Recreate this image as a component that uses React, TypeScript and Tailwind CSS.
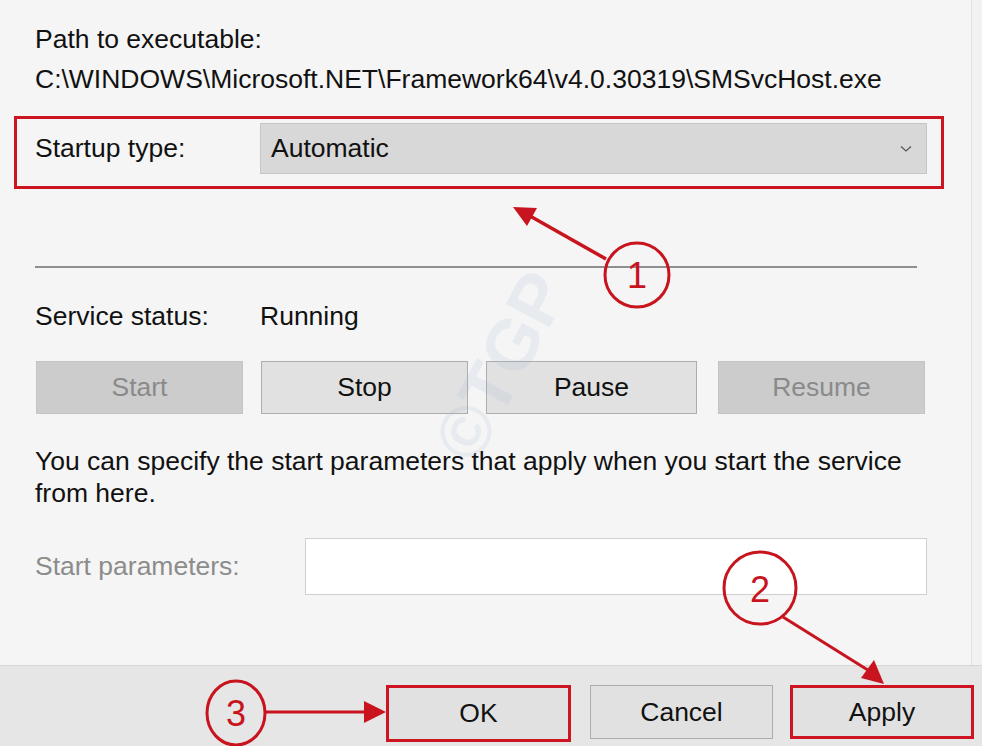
const font = "font-['Liberation_Sans',Arial,sans-serif]";

function ServiceButton({ label, disabled, className }: { label: string; disabled?: boolean; className: string }) {
  return (
    <div
      className={
        (disabled
          ? "h-[53px] flex items-center justify-center border border-[#c4c4c4] bg-[#cccccc] text-[#8a8a8a] "
          : "h-[53px] flex items-center justify-center border border-[#adadad] bg-[#e1e1e1] text-[#111] ") + className
      }
    >
      {label}
    </div>
  );
}

function Annotations() {
  const red = "#c8141e";
  return (
    <svg className="absolute inset-0 pointer-events-none" width="982" height="746" viewBox="0 0 982 746">
      {/* 1 */}
      <line x1="606" y1="259" x2="530" y2="216" stroke={red} strokeWidth="3.5" />
      <polygon points="513,207 537,208 527,226" fill={red} />
      <circle cx="637" cy="275" r="32" fill="none" stroke={red} strokeWidth="3" />
      <text x="637" y="288" textAnchor="middle" fontSize="36" fill={red} fontFamily="Liberation Sans, Arial, sans-serif">1</text>
      {/* 2 */}
      <line x1="783" y1="617" x2="871" y2="672" stroke={red} strokeWidth="3" />
      <polygon points="884,684 861,678 874,660" fill={red} />
      <circle cx="760" cy="588" r="36" fill="none" stroke={red} strokeWidth="3" />
      <text x="760" y="602" textAnchor="middle" fontSize="36" fill={red} fontFamily="Liberation Sans, Arial, sans-serif">2</text>
      {/* 3 */}
      <line x1="265" y1="712" x2="368" y2="712" stroke={red} strokeWidth="3" />
      <polygon points="386,712 364,701 364,723" fill={red} />
      <ellipse cx="236" cy="713" rx="29" ry="32" fill="none" stroke={red} strokeWidth="3" />
      <text x="236" y="726" textAnchor="middle" fontSize="36" fill={red} fontFamily="Liberation Sans, Arial, sans-serif">3</text>
    </svg>
  );
}

export default function App() {
  return (
    <div className={`relative w-[982px] h-[746px] overflow-hidden bg-[#f0f0f0] text-[26.5px] leading-none text-[#111] ${font}`}>
      <div className="flex h-[665px]">
        <div className="w-[972px] bg-[#f5f5f5] border-r border-[#e2e2e2] flex flex-col">
          <div className="pl-[35px] pt-[26px]">Path to executable:</div>
          <div className="pl-[35px] pt-[13px]">C:\WINDOWS\Microsoft.NET\Framework64\v4.0.30319\SMSvcHost.exe</div>

          <div className="ml-[14px] mt-[24px] w-[930px] h-[73px] border-[3px] border-[#cc1520] flex items-start pt-[4px] pl-[18px]">
            <div className="w-[225px] h-[51px] flex items-center">Startup type:</div>
            <div className="w-[667px] h-[51px] bg-[#d8d8d8] border border-[#c6c6c6] flex items-center justify-between pl-[10px] pr-[14px]">
              <span>Automatic</span>
              <svg width="12" height="8" viewBox="0 0 12 8">
                <path d="M1 1.5 L6 6 L11 1.5" fill="none" stroke="#555" strokeWidth="1.2" />
              </svg>
            </div>
          </div>

          <div className="ml-[35px] mt-[77px] w-[882px] h-[2px] bg-[#8f8f8f]" />

          <div className="flex pl-[35px] mt-[35px]">
            <div className="w-[225px]">Service status:</div>
            <div>Running</div>
          </div>

          <div className="flex ml-[36px] mt-[31px]">
            <ServiceButton label="Start" disabled className="w-[207px]" />
            <ServiceButton label="Stop" className="w-[207px] ml-[18px]" />
            <ServiceButton label="Pause" className="w-[211px] ml-[18px]" />
            <ServiceButton label="Resume" disabled className="w-[207px] ml-[21px]" />
          </div>

          <p className="pl-[35px] pr-[50px] mt-[31px] leading-[32px]">
            You can specify the start parameters that apply when you start the service from here.
          </p>

          <div className="flex items-center pl-[35px] mt-[29px]">
            <div className="w-[270px] text-[#8c8c8c]">Start parameters:</div>
            <div className="w-[622px] h-[57px] bg-white border border-[#cfcfcf]" />
          </div>
        </div>
        <div className="flex-1 bg-[#f2f2f2]" />
      </div>

      <div className="h-[81px] bg-[#e6e6e6] border-t border-[#d6d6d6] flex items-start pt-[19px] pl-[386px]">
        <div className="w-[185px] h-[57px] border-[3px] border-[#cc1520] bg-[#e1e1e1] flex items-center justify-center">OK</div>
        <div className="w-[183px] h-[54px] ml-[19px] border border-[#adadad] bg-[#e1e1e1] flex items-center justify-center">Cancel</div>
        <div className="w-[184px] h-[54px] ml-[17px] border-[3px] border-[#cc1520] bg-[#e1e1e1] flex items-center justify-center">Apply</div>
      </div>

      <div className="absolute left-[400px] top-[330px] -rotate-[62deg] text-[72px] font-bold text-[#9fb6d6] opacity-15 pointer-events-none">
        ©TGP
      </div>

      <Annotations />
    </div>
  );
}
